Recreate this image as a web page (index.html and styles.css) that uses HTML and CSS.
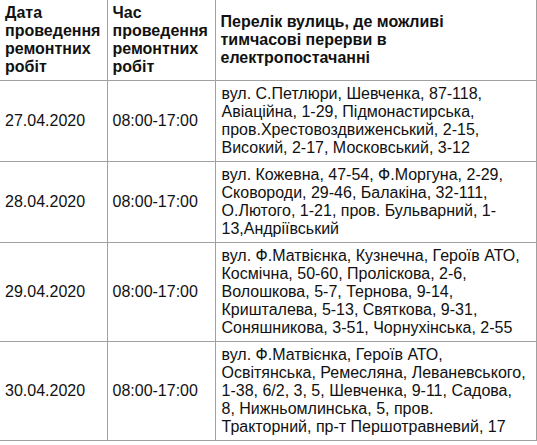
FILE: index.html
```html
<!DOCTYPE html>
<html lang="uk">
<head>
<meta charset="utf-8">
<link rel="stylesheet" href="styles.css">
</head>
<body>
<table class="schedule">
  <colgroup>
    <col class="c-date">
    <col class="c-time">
    <col class="c-streets">
  </colgroup>
  <tr class="head">
    <th>Дата проведення ремонтних робіт</th>
    <th>Час проведення ремонтних робіт</th>
    <th>Перелік вулиць, де можливі<br>тимчасові перерви в<br>електропостачанні</th>
  </tr>
  <tr>
    <td>27.04.2020</td>
    <td>08:00-17:00</td>
    <td class="streets">вул. С.Петлюри, Шевченка, 87-118,<br>Авіаційна, 1-29, Підмонастирська,<br>пров.Хрестовоздвиженський, 2-15,<br>Високий, 2-17, Московський, 3-12</td>
  </tr>
  <tr>
    <td>28.04.2020</td>
    <td>08:00-17:00</td>
    <td class="streets">вул. Кожевна, 47-54, Ф.Моргуна, 2-29,<br>Сковороди, 29-46, Балакіна, 32-111,<br>О.Лютого, 1-21, пров. Бульварний, 1-<br>13,Андріївський</td>
  </tr>
  <tr>
    <td>29.04.2020</td>
    <td>08:00-17:00</td>
    <td class="streets">вул. Ф.Матвієнка, Кузнечна, Героїв АТО,<br>Космічна, 50-60, Пролiскова, 2-6,<br>Волошкова, 5-7, Тернова, 9-14,<br>Кришталева, 5-13, Святкова, 9-31,<br>Соняшникова, 3-51, Чорнухінська, 2-55</td>
  </tr>
  <tr>
    <td>30.04.2020</td>
    <td>08:00-17:00</td>
    <td class="streets">вул. Ф.Матвієнка, Героїв АТО,<br>Освітянська, Ремесляна, Леваневського,<br>1-38, 6/2, 3, 5, Шевченка, 9-11, Садова,<br>8, Нижньомлинська, 5, пров.<br>Тракторний, пр-т Першотравневий, 17</td>
  </tr>
</table>
</body>
</html>
```

FILE: styles.css
```css
html, body {
  margin: 0;
  padding: 0;
  background: #fff;
}

.schedule {
  border-collapse: collapse;
  font-family: "Liberation Sans", Arial, sans-serif;
  font-size: 16px;
  line-height: 18px;
  color: #111;
  width: 536px;
  table-layout: fixed;
}

.c-date { width: 107px; }
.c-time { width: 108px; }
.c-streets { width: 321px; }

.schedule th,
.schedule td {
  border-right: 1px solid #a0a0a0;
  border-bottom: 1px solid #a0a0a0;
  padding: 4px 5px;
  vertical-align: middle;
  text-align: left;
}

.schedule th {
  font-weight: bold;
  height: 71px;
}

.schedule td {
  white-space: nowrap;
}

.schedule td.streets {
  padding-left: 6px;
}
```
